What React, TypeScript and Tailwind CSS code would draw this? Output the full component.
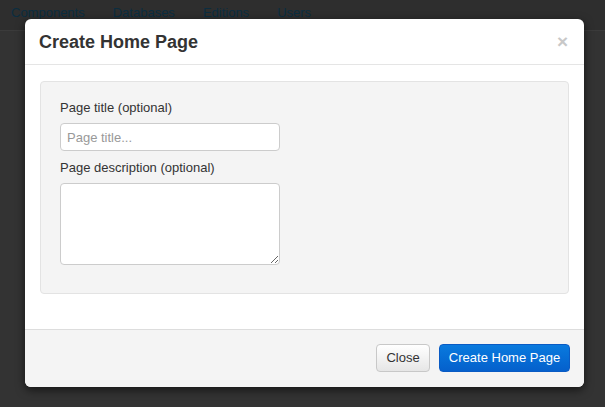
export default function App() {
  const navItems = ['Components', 'Databases', 'Editions', 'Users'];

  return (
    <div className="relative h-[407px] w-[605px] overflow-hidden bg-[#333333] font-['Liberation_Sans',Arial,sans-serif] text-[13px] text-[#333]">
      <div className="flex h-[31px] items-start gap-[28px] border-b border-[#3b3b3b] bg-[#2e2e2e] pl-[11px] pt-[3px] text-[#0b2d40]">
        {navItems.map((item) => (
          <span key={item}>{item}</span>
        ))}
      </div>

      {/* modal */}
      <div className="absolute left-[25px] top-[19px] w-[559px] rounded-[6px] bg-white shadow-[0_3px_10px_rgba(0,0,0,0.6)]">
        <div className="flex h-[46px] items-center justify-between border-b border-[#e5e5e5] pl-[14px] pr-[16px]">
          <h3 className="text-[18px] font-bold leading-none text-[#333]">Create Home Page</h3>
          <button className="text-[19px] font-bold leading-none text-[#c8c8c8]">×</button>
        </div>

        <div className="px-[15px] pb-[35px] pt-[16px]">
          <div className="rounded-[4px] border border-[#e3e3e3] bg-[#f4f4f4] px-[19px] pb-[28px] pt-[16px]">
            <label className="block leading-[19px]">Page title (optional)</label>
            <input
              type="text"
              placeholder="Page title..."
              className="mt-[6px] block h-[28px] w-[220px] rounded-[4px] border border-[#cccccc] bg-white px-[6px] text-[13px] placeholder:text-[#999]"
            />
            <label className="mt-[7px] block leading-[19px]">Page description (optional)</label>
            <textarea className="mt-[6px] block h-[82px] w-[220px] rounded-[4px] border border-[#cccccc] bg-white" />
          </div>
        </div>

        <div className="flex justify-end gap-[9px] rounded-b-[6px] border-t border-[#dddddd] bg-[#f4f4f4] px-[14px] pb-[15px] pt-[14px]">
          <button className="h-[28px] w-[54px] rounded-[4px] border border-[#c8c8c8] bg-gradient-to-b from-white to-[#e6e6e6] text-[13px] text-[#333] shadow-[inset_0_1px_0_rgba(255,255,255,0.3)]">
            Close
          </button>
          <button className="h-[28px] w-[131px] rounded-[4px] border border-[#0a5bc4] bg-gradient-to-b from-[#0a7ade] to-[#0560cc] text-[13px] text-white">
            Create Home Page
          </button>
        </div>
      </div>
    </div>
  );
}
